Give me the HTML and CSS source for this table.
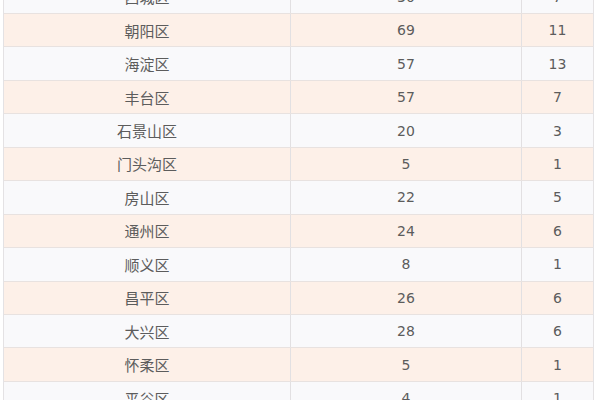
FILE: index.html
```html
<!DOCTYPE html>
<html lang="zh">
<head>
<meta charset="utf-8">
<link rel="stylesheet" href="styles.css">
</head>
<body>
<div class="table">
  <div class="row"><div class="cell">西城区</div><div class="cell">30</div><div class="cell">7</div></div>
  <div class="row alt"><div class="cell">朝阳区</div><div class="cell">69</div><div class="cell">11</div></div>
  <div class="row"><div class="cell">海淀区</div><div class="cell">57</div><div class="cell">13</div></div>
  <div class="row alt"><div class="cell">丰台区</div><div class="cell">57</div><div class="cell">7</div></div>
  <div class="row"><div class="cell">石景山区</div><div class="cell">20</div><div class="cell">3</div></div>
  <div class="row alt"><div class="cell">门头沟区</div><div class="cell">5</div><div class="cell">1</div></div>
  <div class="row"><div class="cell">房山区</div><div class="cell">22</div><div class="cell">5</div></div>
  <div class="row alt"><div class="cell">通州区</div><div class="cell">24</div><div class="cell">6</div></div>
  <div class="row"><div class="cell">顺义区</div><div class="cell">8</div><div class="cell">1</div></div>
  <div class="row alt"><div class="cell">昌平区</div><div class="cell">26</div><div class="cell">6</div></div>
  <div class="row"><div class="cell">大兴区</div><div class="cell">28</div><div class="cell">6</div></div>
  <div class="row alt"><div class="cell">怀柔区</div><div class="cell">5</div><div class="cell">1</div></div>
  <div class="row"><div class="cell">平谷区</div><div class="cell">4</div><div class="cell">1</div></div>
</div>
</body>
</html>
```
FILE: styles.css
```css
html, body {
  margin: 0;
  padding: 0;
  background: #ffffff;
  overflow: hidden;
}
.table {
  margin: -19.45px 0 0 3px;
  width: 591px;
  border-left: 1px solid #e4e2e4;
  border-right: 1px solid #e4e2e4;
  box-sizing: border-box;
  font-family: "DejaVu Sans", "Noto Sans CJK SC", sans-serif;
  font-size: 14px;
  color: #5c5c5c;
}
.row {
  display: grid;
  grid-template-columns: 287px 231px 1fr;
  height: 33.45px;
  box-sizing: border-box;
  border-bottom: 1px solid #e8e2e0;
  background: #f9f9fb;
}
.row.alt {
  background: #fdf0e8;
}
.cell {
  display: flex;
  align-items: center;
  justify-content: center;
  border-right: 1px solid #e2e0e2;
}
.cell:last-child {
  border-right: none;
}
.cell:first-child {
  font-family: "Noto Sans CJK SC", sans-serif;
  font-size: 15px;
}
```
